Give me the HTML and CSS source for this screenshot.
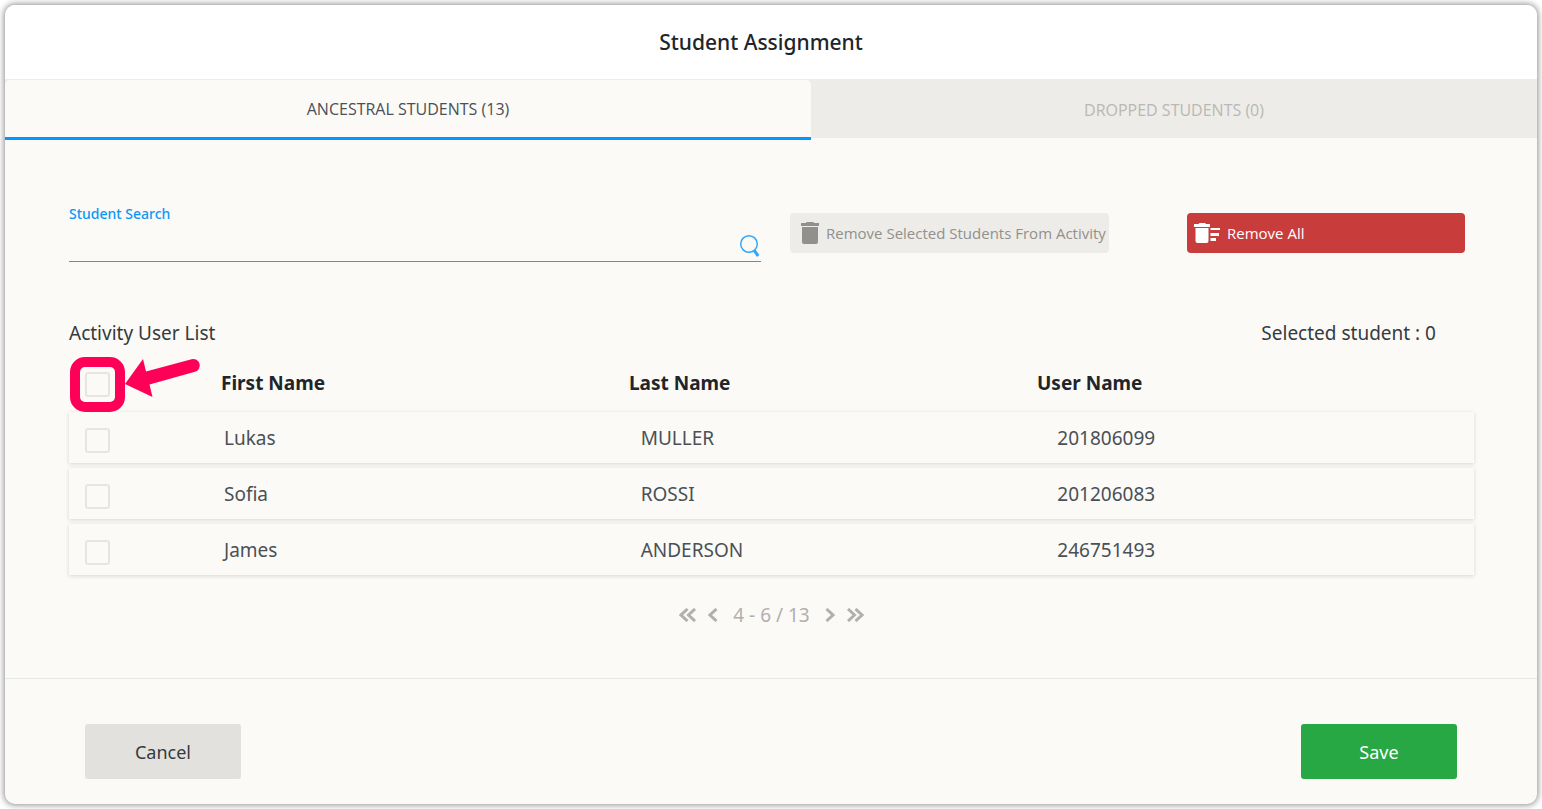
FILE: index.html
```html
<!DOCTYPE html>
<html lang="en">
<head>
<meta charset="utf-8">
<title>Student Assignment</title>
<link rel="stylesheet" href="styles.css">
</head>
<body>
<main class="dialog">
  <header class="dialog-header"><h1 class="dialog-title">Student Assignment</h1></header>
  <div class="tabs" role="tablist">
    <button class="tab tab-active" type="button" role="tab" aria-selected="true">ANCESTRAL STUDENTS (13)</button>
    <button class="tab" type="button" role="tab" aria-selected="false">DROPPED STUDENTS (0)</button>
  </div>
  <section class="content">
    <div class="toolbar">
      <div class="search">
        <label class="search-label" for="search">Student Search</label>
        <div class="search-field">
          <input class="search-input" id="search" type="text">
          <svg class="search-icon" viewBox="0 0 22 24" aria-hidden="true"><circle cx="10" cy="10" r="8.3" fill="none" stroke="#2fa8fb" stroke-width="1.5"/><path d="M15 16.2L19.2 22" stroke="#2fa8fb" stroke-width="3"/></svg>
        </div>
      </div>
      <button class="action action-muted" type="button">
        <svg class="trash-icon" viewBox="0 0 18 22" aria-hidden="true"><path d="M5 1Q5 0 6 0H12Q13 0 13 1H18V4H0V1ZM1 5H17V20Q17 22 15 22H3Q1 22 1 20Z" fill="#91908d"/></svg>
        <span>Remove Selected Students From Activity</span>
      </button>
      <button class="action action-danger" type="button">
        <svg class="sweep-icon" viewBox="0 0 26 20" aria-hidden="true"><path d="M0 1H4.5L5.5 0H11L12 1H16V4H0ZM1.5 5H14.5V18Q14.5 20 12.5 20H3.5Q1.5 20 1.5 18ZM16.5 5H26V7H16.5ZM16.5 10H25V13H16.5ZM16.5 15H22V18H16.5Z" fill="#fff"/></svg>
        <span>Remove All</span>
      </button>
    </div>
    <div class="list-heading">
      <h2 class="list-title">Activity User List</h2>
      <span>Selected student : 0</span>
    </div>
    <table class="users">
      <thead>
        <tr class="head-row">
          <th class="head-check"><input class="check" type="checkbox" aria-label="Select all students">
            <svg class="callout" viewBox="0 0 132 56" aria-hidden="true"><rect x="5" y="5" width="45" height="45" rx="10" fill="none" stroke="#ff0058" stroke-width="10"/><path d="M55 27L73 2L76 14.5L121.5 2.2A6.5 6.5 0 0 1 125 14.8L79.5 27.5L82.5 40Z" fill="#ff0058"/></svg>
          </th>
          <th>First Name</th><th>Last Name</th><th>User Name</th>
        </tr>
      </thead>
      <tbody class="rows">
        <tr class="row"><td class="cell-check"><input class="check" type="checkbox" aria-label="Select Lukas MULLER"></td><td>Lukas</td><td>MULLER</td><td>201806099</td></tr>
        <tr class="row"><td class="cell-check"><input class="check" type="checkbox" aria-label="Select Sofia ROSSI"></td><td>Sofia</td><td>ROSSI</td><td>201206083</td></tr>
        <tr class="row"><td class="cell-check"><input class="check" type="checkbox" aria-label="Select James ANDERSON"></td><td>James</td><td>ANDERSON</td><td>246751493</td></tr>
      </tbody>
    </table>
    <nav class="pager" aria-label="Pages">
      <button class="page-button" type="button" aria-label="First page"><svg class="icon-double" viewBox="0 0 18 14" aria-hidden="true"><path d="M8.5 1L2 7L8.5 13M16 1L9.5 7L16 13" /></svg></button>
      <button class="page-button" type="button" aria-label="Previous page"><svg class="icon-single" viewBox="0 0 10 14" aria-hidden="true"><path d="M8.5 1L2 7L8.5 13"/></svg></button>
      <span class="page-range">4 - 6 / 13</span>
      <button class="page-button" type="button" aria-label="Next page"><svg class="icon-single" viewBox="0 0 10 14" aria-hidden="true"><path d="M1.5 1L8 7L1.5 13"/></svg></button>
      <button class="page-button" type="button" aria-label="Last page"><svg class="icon-double" viewBox="0 0 18 14" aria-hidden="true"><path d="M2 1L8.5 7L2 13M9.5 1L16 7L9.5 13"/></svg></button>
    </nav>
  </section>
  <footer class="dialog-footer">
    <button class="button" type="button">Cancel</button>
    <button class="button button-save" type="button">Save</button>
  </footer>
</main>
</body>
</html>
```
FILE: styles.css
```css
* { box-sizing: border-box; }
body {
  margin: 0;
  padding: 5px;
  background: #fff;
  color: #212529;
  font-family: "Noto Sans", "Open Sans", sans-serif;
  font-size: 19px;
  line-height: 24px;
}
button, input { margin: 0; font: inherit; color: inherit; }
button { padding: 0; border: 0; cursor: pointer; }
svg { display: block; flex: none; }
.dialog {
  background: #fbfaf6;
  border-radius: 10px;
  box-shadow: 0 0 6px 1px rgba(0, 0, 0, 0.45);
  overflow: hidden;
}
.dialog-header {
  padding: 22px 20px 22px 0;
  background: #fff;
  text-align: center;
}
.dialog-title { margin: 0; font-size: 21px; font-weight: 500; line-height: 30px; }
.tabs {
  display: grid;
  grid-template-columns: 806fr 726fr;
  height: 61px;
  padding-bottom: 2px;
  background: linear-gradient(#edece8, #edece8) top / 100% 59px no-repeat;
}
.tab {
  height: 61px;
  background: none;
  color: #b9b8b5;
  font-family: "Open Sans", "Noto Sans", sans-serif;
  font-size: 16px;
  font-weight: 500;
}
.tab-active {
  margin-top: 1px;
  height: 60px;
  padding-top: 1px;
  background: #fbfaf6;
  border-bottom: 3px solid #0099ff;
  border-radius: 5px 5px 0 0;
  color: #495057;
}
.content { padding: 62px 63px 51px 64px; }
.toolbar { display: flex; align-items: flex-start; padding-right: 9px; }
.search { flex: 1; margin-right: 29px; }
.search-label { display: block; color: #0a98f7; font-size: 14px; font-weight: 500; }
.search-field {
  display: flex;
  align-items: center;
  height: 36px;
  border-bottom: 1px solid #3eae79;
}
.search-input { flex: 1; min-width: 0; padding: 0; border: 0; background: none; outline: 0; }
.search-icon { width: 22px; height: 24px; margin-top: 5px; }
.action {
  display: flex;
  align-items: center;
  height: 40px;
  margin-top: 11px;
  border-radius: 4px;
  font-family: "Open Sans", "Noto Sans", sans-serif;
  font-size: 15px;
  white-space: nowrap;
}
.action-muted { width: 319px; margin-right: 78px; padding-left: 11px; gap: 7px; background: #edece8; color: #91908d; }
.action-danger { width: 278px; padding-left: 7px; gap: 7px; background: #c93c3c; color: #fff; }
.trash-icon { width: 18px; height: 22px; }
.sweep-icon { width: 26px; height: 20px; }
.list-heading {
  display: flex;
  justify-content: space-between;
  margin-top: 59px;
  padding-right: 38px;
  color: #343a40;
}
.list-title { margin: 0; font-size: 19px; font-weight: 400; }
.users { display: block; margin-top: 10px; }
.users thead { display: block; padding-bottom: 2px; }
.users th, .users td { padding: 0; text-align: left; }
.head-row, .row { display: grid; align-items: center; }
.head-row { grid-template-columns: 152px 1fr 1fr 1fr; height: 55px; padding-right: 29px; font-weight: 700; }
.row {
  grid-template-columns: 155px 1fr 1fr 1fr;
  height: 51px;
  color: #495057;
  background: #fbfaf6;
  box-shadow: 0 1px 4px rgba(0, 0, 0, 0.15);
}
.rows { display: grid; gap: 5px; }
.users .head-check { position: relative; padding: 4px 0 0 16px; }
.users .cell-check { padding: 6px 0 0 16px; }
.check {
  display: block;
  appearance: none;
  width: 25px;
  height: 25px;
  border: 2px solid #e6e5e1;
  border-radius: 3px;
}
.callout { position: absolute; left: 1px; top: -11px; width: 132px; height: 56px; }
.pager { display: flex; align-items: center; justify-content: center; margin-top: 28px; color: #b1b0ad; }
.page-button { background: none; }
.page-button path { fill: none; stroke: #b1b0ad; stroke-width: 3; }
.icon-double { width: 18px; height: 14px; margin: 0 5px; }
.icon-single { width: 10px; height: 14px; margin: 0 6px; }
.page-range { margin: 0 9px; }
.dialog-footer {
  display: flex;
  justify-content: space-between;
  padding: 45px 80px 25px;
  border-top: 1px solid #e5e9ea;
}
.button { width: 156px; height: 55px; border-radius: 3px; background: #e2e1dd; color: #343a40; font-size: 18px; }
.button-save { background: #28a745; color: #fff; }
```
